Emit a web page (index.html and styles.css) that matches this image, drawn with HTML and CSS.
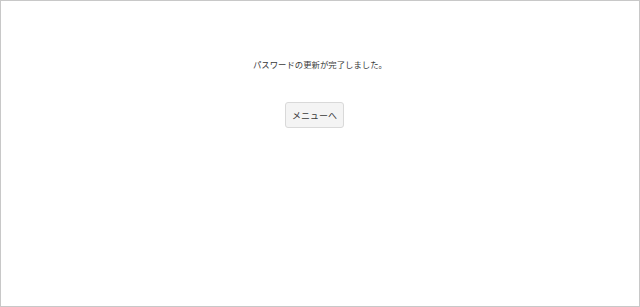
FILE: index.html
```html
<!DOCTYPE html>
<html lang="ja">
<head>
<meta charset="utf-8">
<title>パスワード更新完了</title>
<link rel="stylesheet" href="styles.css">
</head>
<body>
<div class="frame">
  <p class="message">パスワードの更新が完了しました。</p>
  <div class="actions">
    <button class="btn" type="button">メニューへ</button>
  </div>
</div>
</body>
</html>
```

FILE: styles.css
```css
html, body {
  margin: 0;
  padding: 0;
  background: #ffffff;
}
body {
  font-family: "Noto Sans CJK JP", "Noto Sans", sans-serif;
  color: #3a3a3a;
}
.frame {
  box-sizing: border-box;
  width: 640px;
  height: 307px;
  border: 1px solid #c8c8c8;
  padding-top: 56px;
}
.message {
  margin: 0;
  text-align: center;
  font-size: 8.4px;
  line-height: 14px;
}
.actions {
  display: flex;
  justify-content: center;
  margin-top: 31px;
}
.btn {
  box-sizing: border-box;
  width: 59px;
  height: 26px;
  margin-right: 11px;
  padding: 0;
  font-family: inherit;
  font-size: 9px;
  color: #3a3a3a;
  background: #f4f4f4;
  border: 1px solid #d9d9d9;
  border-radius: 3px;
}
```
